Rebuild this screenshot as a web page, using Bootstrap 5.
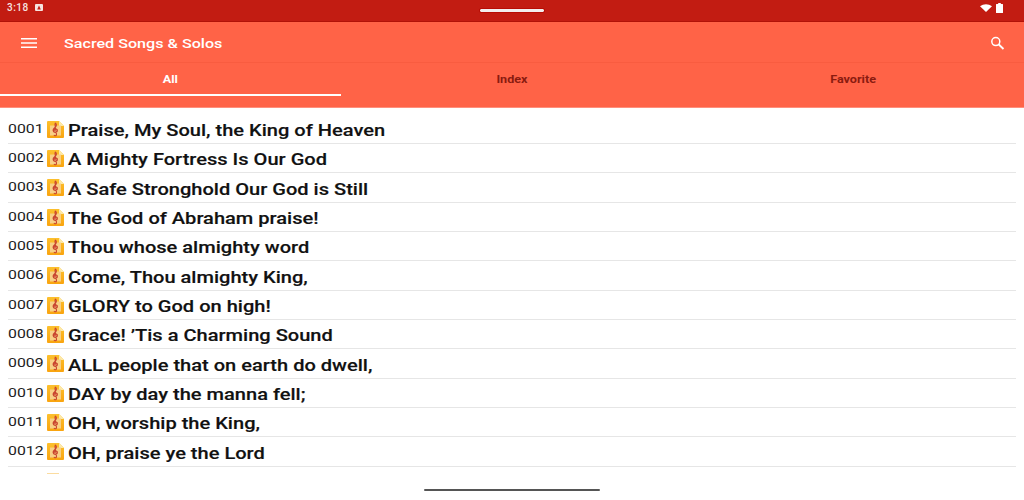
<!DOCTYPE html>
<html lang="en">
<head>
<meta charset="utf-8">
<title>Sacred Songs &amp; Solos</title>
<link href="https://cdn.jsdelivr.net/npm/bootstrap@5.3.0/dist/css/bootstrap.min.css" rel="stylesheet">
<style>
html,body{height:500px;overflow:hidden;background:#fff;font-family:Roboto,"Liberation Sans",sans-serif}
.sys-bar{height:22px;background:#c21c12;border-bottom:1px solid #b01208;color:#f6e4e0;font-size:10px;font-weight:500;letter-spacing:.5px;padding:0 21px 0 7px}
.notif-ic{width:8px;height:7px;margin-left:6px}
.handle{width:64px;height:3px;background:#f2eeee;border-radius:1px;outline:1px solid #b80d05}
.sys-side{margin-bottom:6px}
.side-left{width:127px}
.side-right{width:113px}
.app-bar{height:40px;background:#ff6347;padding:2px 19px 0 21px;color:#fff}
.app-title{font-size:13.5px;font-weight:500;margin-left:27px;transform:scaleX(1.195);transform-origin:left center}
.tab-row{height:46px;background:#ff6347;border-top:1px solid #f95c40;border-bottom:1px solid #ff8f7c}
.tab-cell{flex:1 1 0;margin-bottom:11px;border-bottom:2px solid transparent;padding-top:2px;font-size:10.5px;font-weight:700;color:#8a1b10}
.tab-cell.is-active{color:#fff;border-bottom-color:#fff}
.tab-label{transform:scaleX(1.2)}
.song-list{padding:6.5px 8px 0}
.song-row{height:29.35px;border-bottom:1px solid #e6e6e6;padding-top:7.5px}
.song-num{font-size:13.5px;color:#222;width:38.5px;line-height:14px;margin-top:-1.5px;transform:scaleX(1.17);transform-origin:left center}
.song-ic{width:17px;height:17px;flex:none;margin-right:4px;margin-top:-1.5px}
.song-name{font-size:16px;font-weight:500;color:#111;line-height:18px;-webkit-text-stroke:.15px #111;white-space:nowrap;transform:scaleX(1.253);transform-origin:left center}
.clip{height:7px;overflow:hidden;padding:6px 0 0 39px}
.clip-bit{width:12px;height:1px;background:#fbdca0}
.nav-pill-bar{width:176px;height:2px;background:#555;border-radius:1px;margin:15px auto 0}
</style>
</head>
<body>
<div class="sys-bar d-flex align-items-center justify-content-between">
  <div class="sys-side side-left d-flex align-items-center"><span>3:18</span>
    <svg class="notif-ic" viewBox="0 0 8 7"><rect width="8" height="7" rx="1" fill="#f6e4e0"/><path d="M2.200 5.400 4 1.600l1.800 3.800z" fill="#c21c12"/></svg>
  </div>
  <div class="handle"></div>
  <div class="sys-side side-right d-flex align-items-center justify-content-end gap-1">
    <svg width="12" height="8" viewBox="0 0 12 8"><path d="M0 2.300C3.500-.5 8.500-.5 12 2.300L6 8z" fill="#fff"/></svg>
    <svg width="7" height="10" viewBox="0 0 7 10"><path d="M2.200 0h2.600v1H6.500a.5.5 0 0 1 .5.5V9.500a.5.5 0 0 1-.5.5H.5A.5.5 0 0 1 0 9.500V1.500A.5.5 0 0 1 .5 1h1.700z" fill="#fff"/></svg>
  </div>
</div>
<div class="app-bar d-flex align-items-center">
  <svg width="16" height="10" viewBox="0 0 16 10"><path d="M0 .7h16M0 5h16M0 9.300h16" stroke="#fff" stroke-width="1.400"/></svg>
  <div class="app-title">Sacred Songs &amp; Solos</div>
  <svg class="ms-auto" width="15" height="14" viewBox="0 0 15 14"><circle cx="5.800" cy="5.600" r="4" fill="none" stroke="#fff" stroke-width="1.500"/><path d="M8.800 8.500 13.500 13" stroke="#fff" stroke-width="1.800"/></svg>
</div>
<div class="tab-row d-flex">
  <div class="tab-cell is-active d-flex align-items-center justify-content-center"><span class="tab-label">All</span></div>
  <div class="tab-cell d-flex align-items-center justify-content-center"><span class="tab-label">Index</span></div>
  <div class="tab-cell d-flex align-items-center justify-content-center"><span class="tab-label">Favorite</span></div>
</div>
<svg width="0" height="0" class="d-block">
  <defs>
    <linearGradient id="file-fill" x1="0" y1="0" x2="0" y2="1"><stop offset="0" stop-color="#fcc02e"/><stop offset="1" stop-color="#f9a40f"/></linearGradient>
    <g id="music-file">
      <path d="M1 0h11l5 5v11a1 1 0 0 1-1 1H1a1 1 0 0 1-1-1V1a1 1 0 0 1 1-1z" fill="url(#file-fill)"/>
      <path d="M12 0l5 5h-5z" fill="#fde9a8"/>
      <rect x="3" y="4.500" width="11" height="10" fill="#f8cf86"/>
      <path d="M8.400 1.800c2 2.200.8 3.900-1.200 5.500-1.600 1.300-1.500 3.900.9 4.200 2.300.2 3.300-2.700 1.200-3.500-1.700-.5-2.900 1.100-1.700 2.300M8.400 1.800c-.7.900-.5 2.300-.1 4l1.200 7.500c.2 1.700-2 2-2.500.6" fill="none" stroke="#c8432f" stroke-width="1.100"/>
    </g>
  </defs>
</svg>
<div class="song-list">
  <div class="song-row d-flex align-items-start"><span class="song-num">0001</span><svg class="song-ic" viewBox="0 0 17 17"><use href="#music-file"/></svg><span class="song-name">Praise, My Soul, the King of Heaven</span></div>
  <div class="song-row d-flex align-items-start"><span class="song-num">0002</span><svg class="song-ic" viewBox="0 0 17 17"><use href="#music-file"/></svg><span class="song-name">A Mighty Fortress Is Our God</span></div>
  <div class="song-row d-flex align-items-start"><span class="song-num">0003</span><svg class="song-ic" viewBox="0 0 17 17"><use href="#music-file"/></svg><span class="song-name">A Safe Stronghold Our God is Still</span></div>
  <div class="song-row d-flex align-items-start"><span class="song-num">0004</span><svg class="song-ic" viewBox="0 0 17 17"><use href="#music-file"/></svg><span class="song-name">The God of Abraham praise!</span></div>
  <div class="song-row d-flex align-items-start"><span class="song-num">0005</span><svg class="song-ic" viewBox="0 0 17 17"><use href="#music-file"/></svg><span class="song-name">Thou whose almighty word</span></div>
  <div class="song-row d-flex align-items-start"><span class="song-num">0006</span><svg class="song-ic" viewBox="0 0 17 17"><use href="#music-file"/></svg><span class="song-name">Come, Thou almighty King,</span></div>
  <div class="song-row d-flex align-items-start"><span class="song-num">0007</span><svg class="song-ic" viewBox="0 0 17 17"><use href="#music-file"/></svg><span class="song-name">GLORY to God on high!</span></div>
  <div class="song-row d-flex align-items-start"><span class="song-num">0008</span><svg class="song-ic" viewBox="0 0 17 17"><use href="#music-file"/></svg><span class="song-name">Grace! ’Tis a Charming Sound</span></div>
  <div class="song-row d-flex align-items-start"><span class="song-num">0009</span><svg class="song-ic" viewBox="0 0 17 17"><use href="#music-file"/></svg><span class="song-name">ALL people that on earth do dwell,</span></div>
  <div class="song-row d-flex align-items-start"><span class="song-num">0010</span><svg class="song-ic" viewBox="0 0 17 17"><use href="#music-file"/></svg><span class="song-name">DAY by day the manna fell;</span></div>
  <div class="song-row d-flex align-items-start"><span class="song-num">0011</span><svg class="song-ic" viewBox="0 0 17 17"><use href="#music-file"/></svg><span class="song-name">OH, worship the King,</span></div>
  <div class="song-row d-flex align-items-start"><span class="song-num">0012</span><svg class="song-ic" viewBox="0 0 17 17"><use href="#music-file"/></svg><span class="song-name">OH, praise ye the Lord</span></div>
  <div class="clip"><div class="clip-bit"></div></div>
</div>
<div class="nav-pill-bar"></div>
</body>
</html>
